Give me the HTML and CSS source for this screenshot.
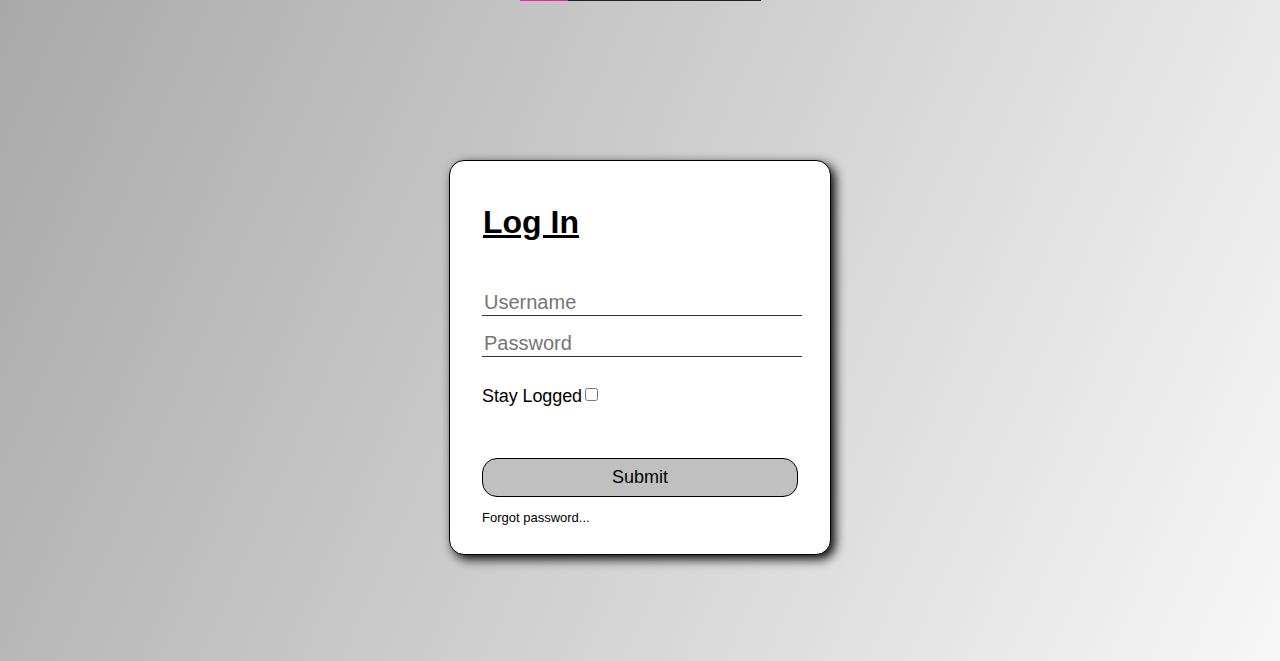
FILE: index.html
```html
<!DOCTYPE html>
<html lang="en">
<head>
<meta charset="utf-8">
<title>Log In</title>
<link rel="stylesheet" href="styles.css">
</head>
<body>
<div class="progress"><div class="progress-fill"></div></div>
<main class="page">
  <form class="card">
    <h1 class="title">Log In</h1>
    <input class="field field-user" type="text" placeholder="Username">
    <input class="field field-pass" type="password" placeholder="Password">
    <label class="stay">Stay Logged <input class="check" type="checkbox"></label>
    <button class="submit" type="button">Submit</button>
    <a class="forgot" href="#">Forgot password...</a>
  </form>
</main>
</body>
</html>
```
FILE: styles.css
```css
html, body {
  margin: 0;
  height: 100%;
}
body {
  background: linear-gradient(114deg, #a9a9a9, #f7f7f7);
  font-family: "Liberation Sans", Arial, sans-serif;
  overflow: hidden;
}
.progress {
  width: 241px;
  height: 1px;
  margin: 0 auto;
  background: #222;
  display: flex;
}
.progress-fill {
  width: 48px;
  background: #ff1aa8;
}
.page {
  display: flex;
  justify-content: center;
  padding-top: 159px;
}
.card {
  box-sizing: border-box;
  width: 382px;
  height: 395px;
  background: #fff;
  border: 1px solid #000;
  border-radius: 15px;
  box-shadow: 4px 4px 11px #000;
  padding: 43px 30px 0 33px;
  display: flex;
  flex-direction: column;
  align-items: flex-start;
}
.title {
  margin: 0;
  font-size: 32px;
  line-height: 37px;
  font-weight: bold;
  text-decoration: underline;
  color: #000;
}
.field {
  box-sizing: border-box;
  width: 320px;
  height: 26px;
  margin: 0 0 0 -1px;
  padding: 0 2px;
  border: none;
  border-bottom: 1px solid #333;
  background: transparent;
  font-family: "Liberation Sans", Arial, sans-serif;
  font-size: 20px;
  outline: none;
}
.field::placeholder {
  color: #757575;
}
.field-user {
  margin-top: 49px;
}
.field-pass {
  margin-top: 15px;
}
.stay {
  display: block;
  margin: 29px 0 0 -1px;
  font-size: 18px;
  line-height: 21px;
  letter-spacing: -0.1px;
  color: #000;
  white-space: nowrap;
}
.check {
  width: 13px;
  height: 13px;
  margin: 0 0 0 -2px;
  vertical-align: 1px;
}
.submit {
  box-sizing: border-box;
  width: 316px;
  height: 39px;
  margin: 51px 0 0 -1px;
  border: 1px solid #000;
  border-radius: 15px;
  background: #c0c0c0;
  font-family: "Liberation Sans", Arial, sans-serif;
  font-size: 18px;
  color: #000;
  padding: 0;
}
.forgot {
  margin: 13px 0 0 -1px;
  font-size: 13px;
  line-height: 15px;
  color: #000;
  text-decoration: none;
}
```
